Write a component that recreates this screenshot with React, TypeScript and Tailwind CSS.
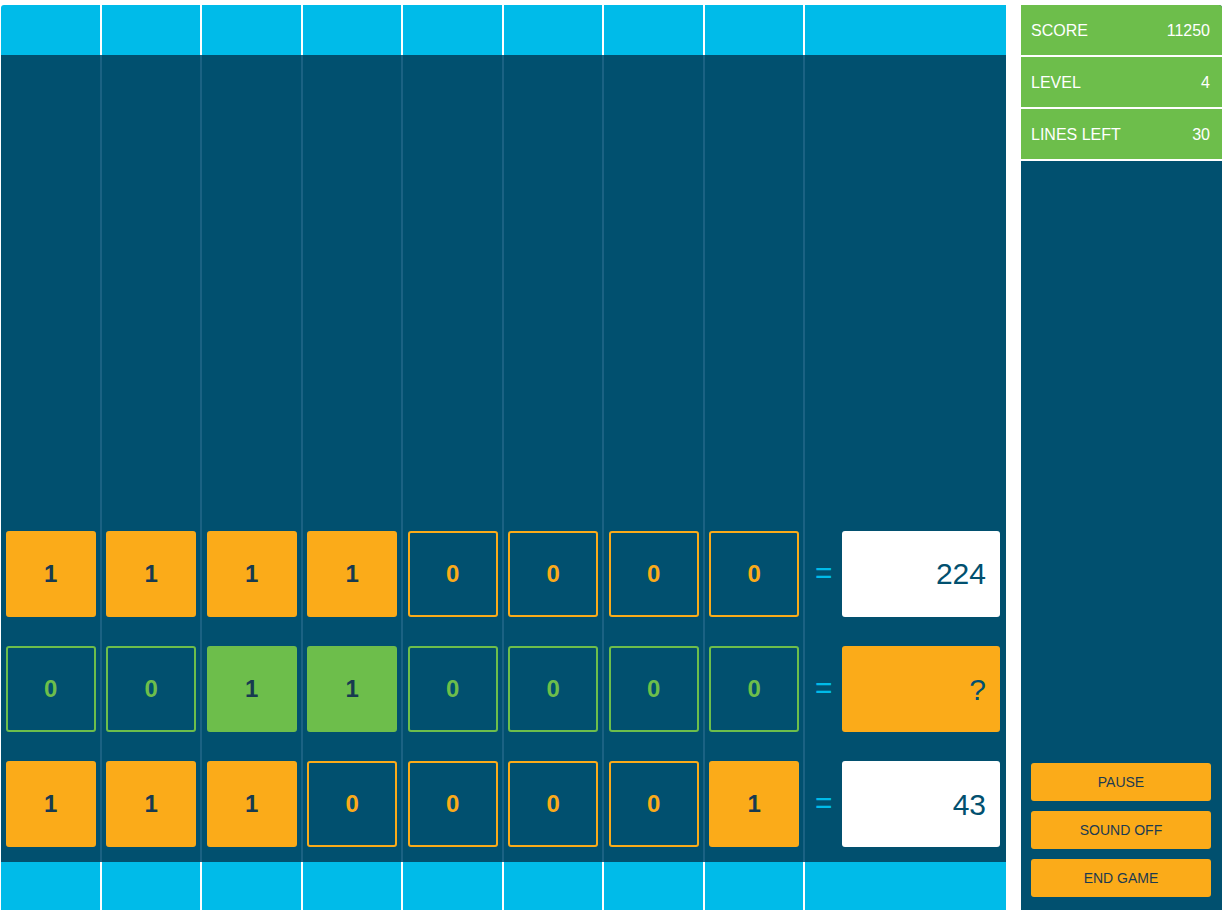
import React from "react";

type Tile = { v: 0 | 1; color: "orange" | "green" };

const rows: { bits: number[]; color: "orange" | "green"; result: string; pending?: boolean }[] = [
  { bits: [1, 1, 1, 1, 0, 0, 0, 0], color: "orange", result: "224" },
  { bits: [0, 0, 1, 1, 0, 0, 0, 0], color: "green", result: "?", pending: true },
  { bits: [1, 1, 1, 0, 0, 0, 0, 1], color: "orange", result: "43" },
];

function Bit({ v, color }: Tile) {
  const filled =
    color === "orange"
      ? "bg-[#fbab19] border-[#fbab19] text-[#173a50]"
      : "bg-[#6dbe4b] border-[#6dbe4b] text-[#173a50]";
  const outline =
    color === "orange"
      ? "border-[#fbab19] text-[#fbab19]"
      : "border-[#6dbe4b] text-[#6dbe4b]";
  return (
    <div className="h-[115.3px] flex items-center justify-center">
      <div
        className={`w-[90px] h-[86px] rounded-[3px] border-2 flex items-center justify-center text-[24px] font-bold ${
          v ? filled : outline
        }`}
      >
        {v}
      </div>
    </div>
  );
}

function Stat({ label, value }: { label: string; value: string }) {
  return (
    <div className="h-[52px] border-b-2 border-white bg-[#6dbe4b] flex items-center justify-between pl-[10px] pr-[12px] pt-[1px] text-white text-[16px]">
      <span>{label}</span>
      <span>{value}</span>
    </div>
  );
}

function SideButton({ children }: { children: React.ReactNode }) {
  return (
    <button className="h-[38px] w-full rounded-[3px] bg-[#fbab19] text-[#1c3a50] text-[14px]">
      {children}
    </button>
  );
}

export default function App() {
  const cols = [0, 1, 2, 3, 4, 5, 6, 7];
  return (
    <div
      className="flex gap-[15px] pt-[5px] pl-[1px] bg-white min-h-screen"
      style={{ fontFamily: '"Liberation Sans", Arial, sans-serif' }}
    >
      <div className="w-[1005px] flex flex-col rounded-tl-[3px] overflow-hidden">
        {/* top band */}
        <div className="h-[50px] flex bg-[#00bbe9]">
          {cols.map((c) => (
            <div key={c} className="w-[100.5px] border-r-2 border-white" />
          ))}
          <div className="flex-1" />
        </div>

        {/* play field */}
        <div className="h-[807px] flex bg-[#01506f]">
          {cols.map((c) => (
            <div
              key={c}
              className="w-[100.5px] pl-[1px] border-r-2 border-[#1b6283] flex flex-col justify-end"
            >
              {rows.map((r, i) => (
                <Bit key={i} v={r.bits[c] as 0 | 1} color={r.color} />
              ))}
            </div>
          ))}
          <div className="flex-1 flex flex-col justify-end">
            {rows.map((r, i) => (
              <div key={i} className="h-[115.3px] flex items-center pl-[10px] pr-[6px]">
                <span className="w-[16px] text-[#00bbe9] text-[30px] leading-none mr-[11px] -mt-[2px]">
                  =
                </span>
                <div
                  className={`flex-1 h-[86px] rounded-[3px] flex items-center justify-end pr-[14px] text-[30px] text-[#01506f] ${
                    r.pending ? "bg-[#fbab19]" : "bg-white"
                  }`}
                >
                  {r.result}
                </div>
              </div>
            ))}
          </div>
        </div>

        {/* bottom band */}
        <div className="h-[48px] flex bg-[#00bbe9]">
          {cols.map((c) => (
            <div key={c} className="w-[100.5px] border-r-2 border-white" />
          ))}
          <div className="flex-1" />
        </div>
      </div>

      <aside className="w-[201px] h-[905px] flex flex-col bg-[#01506f] rounded-tr-[3px] overflow-hidden">
        <Stat label="SCORE" value="11250" />
        <Stat label="LEVEL" value="4" />
        <Stat label="LINES LEFT" value="30" />
        <div className="flex-1" />
        <div className="flex flex-col gap-[10px] pl-[10px] pr-[11px] pb-[13px]">
          <SideButton>PAUSE</SideButton>
          <SideButton>SOUND OFF</SideButton>
          <SideButton>END GAME</SideButton>
        </div>
      </aside>
    </div>
  );
}
